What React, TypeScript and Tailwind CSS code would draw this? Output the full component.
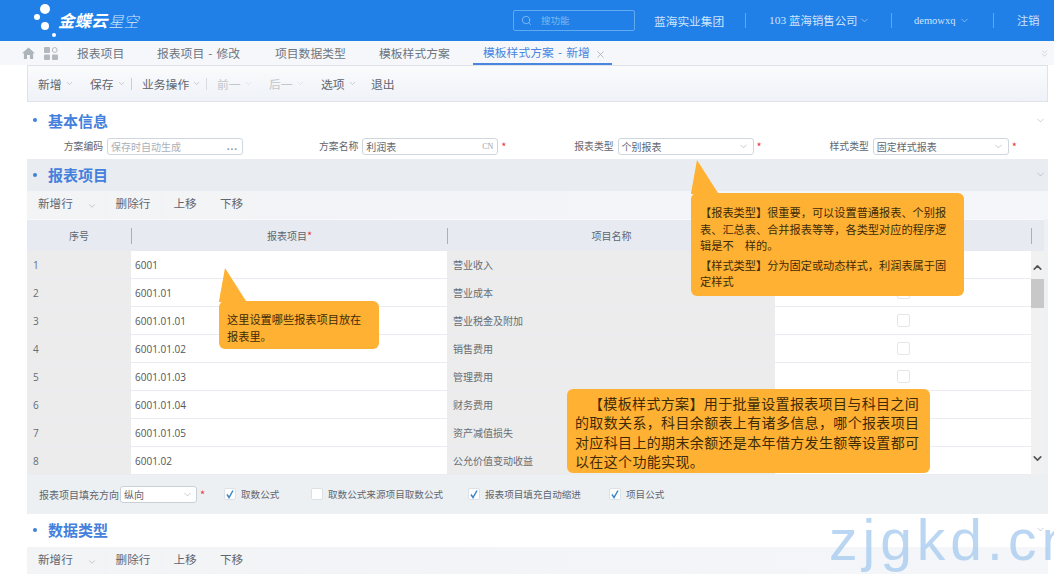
import { ChevronDown, ChevronUp, Search, X, ChevronsDown } from "lucide-react";

const cjk = { fontFamily: '"Noto Sans CJK SC", "Noto Sans", sans-serif' };

function Chev({ className = "", size = 10, color = "#8d96a3" }: { className?: string; size?: number; color?: string }) {
  return <ChevronDown size={size} strokeWidth={1.2} color={color} className={"shrink-0 " + className} />;
}

function Req() {
  return <span className="text-[11px] leading-none text-[#e8343c]">*</span>;
}

function Logo() {
  return (
    <div className="flex w-[140px] items-center">
      <svg width="28" height="38" viewBox="0 0 28 38" className="shrink-0">
        <circle cx="13" cy="7" r="5" fill="#fff" />
        <circle cx="5" cy="15" r="3" fill="#fff" />
        <circle cx="13" cy="24" r="4" fill="#fff" />
        <circle cx="22" cy="33" r="2" fill="#fff" />
      </svg>
      <span className="ml-[-2px] text-[16.5px] font-bold italic leading-none text-white">金蝶云</span>
      <span className="ml-[1px] text-[15px] font-light italic leading-none text-[#d5e7fb]">星空</span>
    </div>
  );
}

function TopBar() {
  return (
    <div className="flex h-[41px] items-center whitespace-nowrap bg-[#2080e8] pl-[32px] text-[#cfe4fb]">
      <Logo />
      <div className="ml-[341px] flex h-[21px] w-[122px] items-center rounded-[2px] border border-[#60aaf2] pl-[7px]">
        <Search size={11} strokeWidth={1.4} color="#a9d0f7" />
        <span className="ml-[9px] text-[9.5px] text-[#7fb8f0]">搜功能</span>
      </div>
      <span className="ml-[19px] w-[70px] text-[11.7px]">蓝海实业集团</span>
      <span className="ml-[21px] h-[15px] w-px bg-[#5ea8f0]" />
      <span className="ml-[23px] flex w-[99px] items-center text-[11.4px]">
        <span style={{ fontFamily: '"Liberation Serif", serif' }}>103</span>
        <span className="ml-[3px]">蓝海销售公司</span>
        <Chev className="ml-[2px]" size={11} color="#cfe4fb" />
      </span>
      <span className="ml-[23px] h-[15px] w-px bg-[#5ea8f0]" />
      <span className="ml-[22px] flex w-[56px] items-center text-[10.5px]" style={{ fontFamily: '"Liberation Serif", serif' }}>
        demowxq
        <Chev className="ml-[4px]" size={11} color="#cfe4fb" />
      </span>
      <span className="ml-[23px] h-[15px] w-px bg-[#5ea8f0]" />
      <span className="ml-[23px] text-[11.2px]">注销</span>
    </div>
  );
}

function Tabs() {
  return (
    <div className="flex h-[24px] items-center whitespace-nowrap bg-[#f5f7fa] pl-[22px] pr-[4px] text-[11.8px] text-[#6d7580]">
      <svg width="13" height="12" viewBox="0 0 14 13" className="shrink-0">
        <path d="M7 0.5 L14 6.8 H12 V13 H8.6 V8.6 H5.4 V13 H2 V6.8 H0 Z" fill="#aeb4bc" />
      </svg>
      <svg width="14" height="13" viewBox="0 0 14 13" className="ml-[9px] shrink-0">
        <rect x="0" y="0" width="6" height="6" rx="1" fill="#b3b8bf" />
        <circle cx="10.7" cy="3" r="2.4" fill="none" stroke="#b3b8bf" strokeWidth="1" />
        <rect x="0" y="7.5" width="6" height="5.5" rx="1" fill="#b3b8bf" />
        <rect x="8" y="7.5" width="6" height="5.5" rx="1" fill="#b3b8bf" />
      </svg>
      <span className="ml-[19px] w-[48px]">报表项目</span>
      <span className="ml-[32px] w-[84px] [word-spacing:1.5px]">报表项目 - 修改</span>
      <span className="ml-[34px] w-[71px]">项目数据类型</span>
      <span className="ml-[33px] w-[72px]">模板样式方案</span>
      <span className="relative ml-[22px] flex h-[24px] w-[139px] items-center border-b-2 border-[#4a86e0] pl-[10px] text-[#4a86e0] [word-spacing:1.5px]">
        模板样式方案 - 新增
        <X size={11} strokeWidth={1.3} color="#8d96a3" className="absolute right-[6px] top-[8px]" />
      </span>
      <ChevronsDown size={11} strokeWidth={1.1} color="#b0b6be" className="ml-auto" />
    </div>
  );
}

function ToolItem({ label, dim, w }: { label: string; dim?: boolean; w: string }) {
  return (
    <span className={"flex items-center " + w + (dim ? " text-[#c1c6cc]" : " text-[#5f6670]")}>
      {label}
      <Chev className="ml-[3px]" size={9} color={dim ? "#c8ccd2" : "#8f96a1"} />
    </span>
  );
}

function MainToolbar() {
  return (
    <div className="flex h-[37px] items-center border border-[#dfe3e8] bg-gradient-to-b from-[#fafbfc] to-[#eff2f8] pl-[10px] text-[11.8px]">
      <ToolItem label="新增" w="w-[52px]" />
      <ToolItem label="保存" w="w-[41px]" />
      <span className="h-[12px] w-px bg-[#c9ced4]" />
      <span className="ml-[10px]"><ToolItem label="业务操作" w="w-[64px]" /></span>
      <span className="h-[12px] w-px bg-[#d8dbe0]" />
      <span className="ml-[10px]"><ToolItem label="前一" dim w="w-[52px]" /></span>
      <ToolItem label="后一" dim w="w-[52px]" />
      <ToolItem label="选项" w="w-[50px]" />
      <span className="text-[#5f6670]">退出</span>
    </div>
  );
}

function SectionTitle({ title, bg = "", h = "h-[32px]", pad = "pb-[1px]" }: { title: string; bg?: string; h?: string; pad?: string }) {
  return (
    <div className={"flex items-center pl-[6px] pr-[2px] " + h + " " + bg + " " + pad}>
      <span className="h-[4px] w-[4px] rounded-full bg-[#3d82d8]" />
      <span className="ml-[11px] text-[15px] font-bold leading-none text-[#4480dc]" style={{ fontFamily: '"Noto Sans CJK SC", sans-serif' }}>
        {title}
      </span>
      <Chev className="ml-auto" size={11} color="#a0a7b1" />
    </div>
  );
}

function Field({ label, text, ph, type, req }: { label: string; text: string; ph?: boolean; type: "more" | "cn" | "select"; req?: boolean }) {
  return (
    <div className="flex w-[255.6px] items-center text-[10px]">
      <span className="w-[76px] text-right text-[9.8px] text-[#5f6670]">{label}</span>
      <div className="ml-[4px] flex h-[17px] w-[136px] items-center rounded-[3px] border border-[#cfd6de] bg-white pl-[3px] pr-[4px]">
        <span className={ph ? "text-[#aab0b8]" : "text-[#5f6670]"}>{text}</span>
        {type === "more" && (
          <span className="ml-auto text-[10px] font-bold leading-none tracking-[1px] text-[#8b929c]" style={{ fontFamily: '"Liberation Sans", sans-serif' }}>
            ...
          </span>
        )}
        {type === "cn" && <span className="ml-auto text-[8px] text-[#9aa1ab]" style={{ fontFamily: '"Liberation Serif", serif' }}>CN</span>}
        {type === "select" && <Chev className="ml-auto" size={11} color="#9aa1ab" />}
      </div>
      {req && <span className="ml-[3px]"><Req /></span>}
    </div>
  );
}

function RowToolbar() {
  const btn = "flex h-full items-center justify-center bg-[#f3f4f6] pb-[3px] text-[11.6px] text-[#5f6670]";
  return (
    <div className="flex h-[28px] items-center bg-gradient-to-r from-[#f1f3f7] to-[#f4f6fa]">
      <span className={btn + " w-[77px] justify-start pl-[11px]"}>
        新增行
        <Chev className="ml-[14px] mt-[4px]" size={10} />
      </span>
      <span className={btn + " ml-[3px] w-[52px]"}>删除行</span>
      <span className={btn + " ml-[4px] w-[44px]"}>上移</span>
      <span className={btn + " ml-[3px] w-[43px]"}>下移</span>
    </div>
  );
}

const rows: [string, string, string][] = [
  ["1", "6001", "营业收入"],
  ["2", "6001.01", "营业成本"],
  ["3", "6001.01.01", "营业税金及附加"],
  ["4", "6001.01.02", "销售费用"],
  ["5", "6001.01.03", "管理费用"],
  ["6", "6001.01.04", "财务费用"],
  ["7", "6001.01.05", "资产减值损失"],
  ["8", "6001.02", "公允价值变动收益"],
];

function Table() {
  return (
    <div className="bg-[#eef1f4] pr-[4px]">
      <div className="flex h-[32px] items-center border-t border-[#f8f9fb] bg-[#e7ebf1] text-[10px] text-[#5f6670]">
        <span className="w-[104px] text-center">序号</span>
        <span className="h-[16px] w-px bg-[#a9b0b9]" />
        <span className="w-[315px] text-center">
          报表项目<Req />
        </span>
        <span className="h-[16px] w-px bg-[#a9b0b9]" />
        <span className="w-[327px] text-center">项目名称</span>
        <span className="w-[256px]" />
        <span className="h-[16px] w-px bg-[#a9b0b9]" />
      </div>
      <div className="flex">
        <div className="w-[1004px]">
          {rows.map(([n, code, name]) => (
            <div key={n} className="flex h-[28px] items-center border-b border-[#e9ecf1] text-[10px] leading-none text-[#666c75]">
              <span className="flex h-full w-[104px] items-center bg-[#ececec] pl-[6px]" style={{ fontFamily: '"Open Sans", sans-serif' }}>{n}</span>
              <span className="flex h-full w-[316px] items-center bg-white pl-[4px] text-[#555]" style={{ fontFamily: '"Open Sans", sans-serif' }}>{code}</span>
              <span className="flex h-full w-[328px] items-center bg-[#ececec] pl-[6px]">{name}</span>
              <span className="flex h-full w-[256px] items-center justify-center bg-white">
                <span className="h-[13px] w-[13px] rounded-[2px] border border-[#e4e6e9] bg-white" />
              </span>
            </div>
          ))}
        </div>
        <div className="flex w-[13px] flex-col items-center bg-[#f1f1f1]">
          <ChevronUp size={13} strokeWidth={3} color="#555" className="mt-[10px]" />
          <div className="mt-[5px] h-[29px] w-full bg-[#c8c8c8]" />
          <ChevronDown size={13} strokeWidth={3} color="#555" className="mb-[10px] mt-auto" />
        </div>
      </div>
    </div>
  );
}

function Check({ on, label, cls }: { on?: boolean; label: string; cls: string }) {
  return (
    <span className={"flex items-center text-[9.6px] " + cls}>
      <span className="flex h-[12px] w-[12px] items-center justify-center rounded-[2px] border border-[#dde1e6] bg-white">
        {on && (
          <svg width="10" height="10" viewBox="0 0 10 10">
            <path d="M2 5.5 L4 8.5 L8 1.5" fill="none" stroke="#3b86c9" strokeWidth="1.5" />
          </svg>
        )}
      </span>
      <span className="ml-[5px] text-[#5f6670]">{label}</span>
    </span>
  );
}

function FooterRow() {
  return (
    <div className="flex h-[39px] items-center whitespace-nowrap bg-[#ecf0f3] pb-[1px] pl-[12px] text-[10px]">
      <span className="w-[81px] text-[#5f6670]">报表项目填充方向</span>
      <div className="flex h-[17px] w-[77px] items-center rounded-[3px] border border-[#c9d0d8] bg-white pl-[3px] pr-[3px] text-[#5f6670]">
        纵向
        <Chev className="ml-auto" size={11} color="#9aa1ab" />
      </div>
      <span className="ml-[3px] w-[24px]"><Req /></span>
      <Check on label="取数公式" cls="w-[87px]" />
      <Check label="取数公式来源项目取数公式" cls="w-[157px]" />
      <Check on label="报表项目填充自动缩进" cls="w-[141px]" />
      <Check on label="项目公式" cls="" />
    </div>
  );
}

function Callout({ pos, children }: { pos: string; children: React.ReactNode }) {
  return (
    <div className={"absolute rounded-[6px] bg-[#ffb133] text-[#3f2b07] " + pos}>
      <svg width="28" height="34" viewBox="0 0 28 34" className="absolute left-0 top-[-33px]">
        <path d="M6 0 L27 33 L26 34 H0 V33 Z" fill="#ffb133" />
      </svg>
      {children}
    </div>
  );
}

export default function App() {
  return (
    <div className="relative h-[574px] w-[1054px] overflow-hidden bg-white" style={cjk}>
      <TopBar />
      <Tabs />
      <div className="pl-[27px] pr-[6px]">
        <MainToolbar />
        <SectionTitle title="基本信息" h="h-[36px]" pad="" />
        <div className="flex h-[21px] items-start">
          <Field label="方案编码" text="保存时自动生成" ph type="more" />
          <Field label="方案名称" text="利润表" type="cn" req />
          <Field label="报表类型" text="个别报表" type="select" req />
          <Field label="样式类型" text="固定样式报表" type="select" req />
        </div>
        <SectionTitle title="报表项目" bg="bg-[#e9edf2]" />
        <RowToolbar />
        <Table />
        <FooterRow />
        <SectionTitle title="数据类型" h="h-[33px]" pad="pb-[2px]" />
        <RowToolbar />
      </div>

      <Callout pos="left-[691px] top-[193px] h-[103px] w-[273px] pl-[9px] pr-[8px] pt-[11px] text-[11.2px] leading-[16.5px]">
        <p className="m-0">【报表类型】很重要，可以设置普通报表、个别报表、汇总表、合并报表等等，各类型对应的程序逻辑是不　样的。</p>
        <p className="m-0 mt-[3px]">【样式类型】分为固定或动态样式，利润表属于固定样式</p>
      </Callout>
      <Callout pos="left-[219px] top-[301px] h-[48px] w-[160px] pl-[8px] pr-[8px] pt-[10px] text-[11.2px] leading-[16.5px]">
        这里设置哪些报表项目放在报表里。
      </Callout>
      <div className="absolute left-[567px] top-[389px] h-[84px] w-[363px] rounded-[6px] bg-[#ffb133] pl-[8px] pr-[6px] pt-[5px] text-[14px] leading-[19.4px] tracking-[0.35px] text-[#3f2b07]">
        <p className="m-0 indent-[14px]">【模板样式方案】用于批量设置报表项目与科目之间的取数关系，科目余额表上有诸多信息，哪个报表项目对应科目上的期末余额还是本年借方发生额等设置都可以在这个功能实现。</p>
      </div>
      <div
        className="pointer-events-none absolute left-[829px] top-[504px] whitespace-nowrap text-[57px] leading-[72px] tracking-[5px] text-[#a9cdf0] opacity-80"
        style={{ fontFamily: '"Liberation Sans", sans-serif' }}
      >
        zjgkd.cn
      </div>
    </div>
  );
}
